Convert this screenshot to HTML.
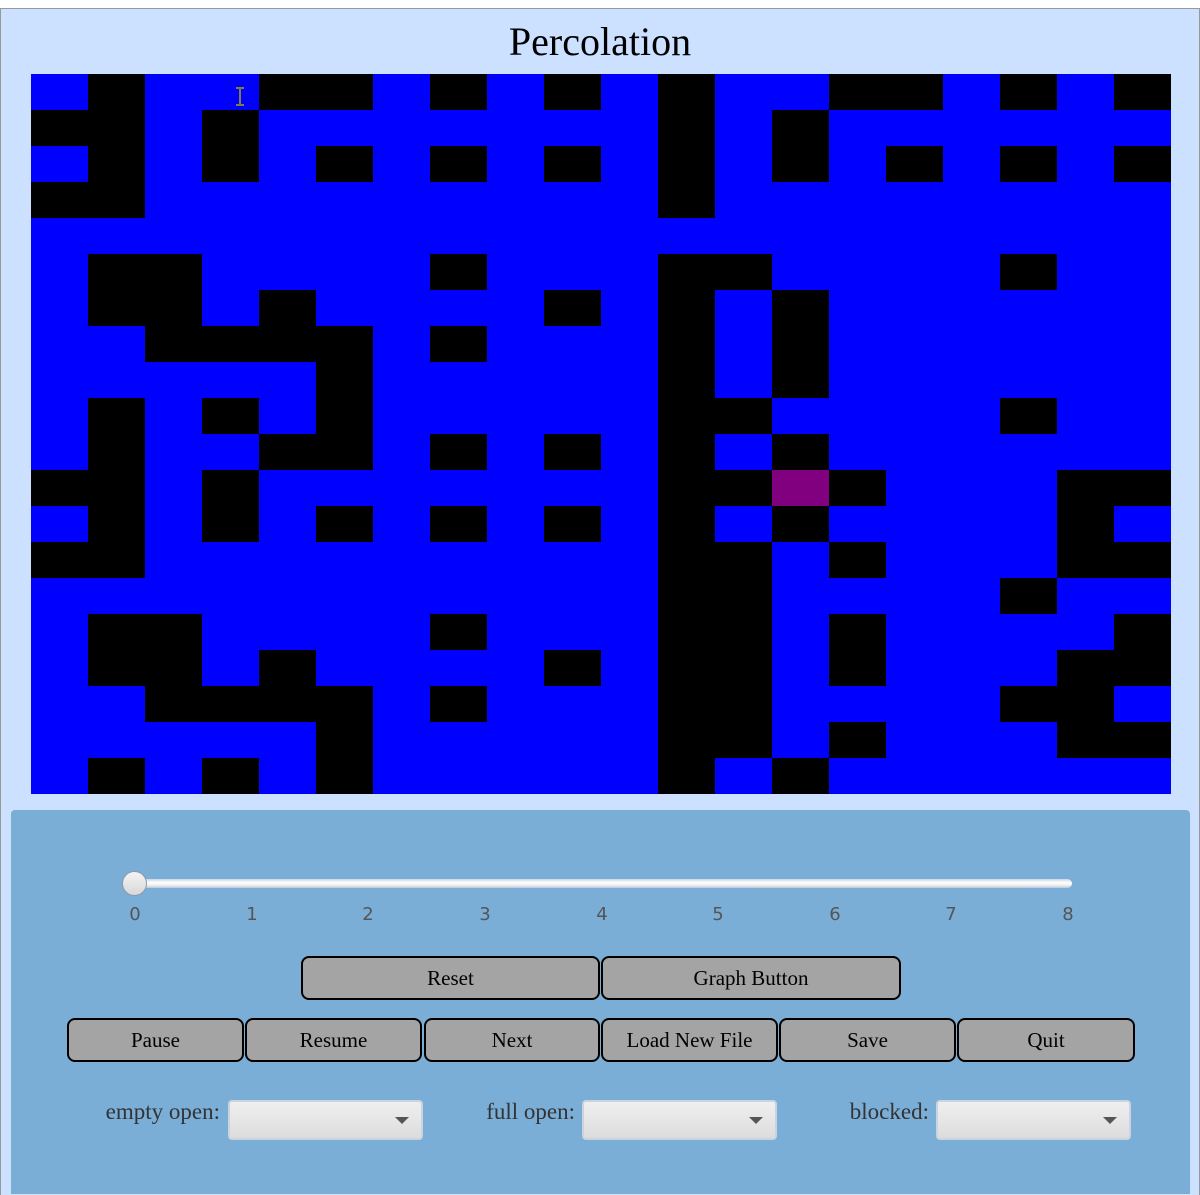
<!DOCTYPE html>
<html><head><style>
body{margin:0;width:1200px;height:1194px;background:#fff;position:relative;overflow:hidden;font-family:"Liberation Serif",serif}
#frame{position:absolute;left:0;top:8px;width:1198px;height:1186px;background:#cce0ff;border:1px solid #999;border-bottom:none}
h1{position:absolute;left:0;width:1200px;top:20px;margin:0;text-align:center;font-weight:normal;font-size:40px;line-height:44px}
#grid{position:absolute;left:31px;top:74px;width:1140px;height:720px;background:#0000ff}
#grid div{position:absolute;width:57px;height:36px;background:#000}
#panel{position:absolute;left:11px;top:810px;width:1179px;height:384px;background:#7aaed6;border-radius:4px 4px 0 0}
.track{position:absolute;left:130px;top:879px;width:942px;height:9px;border-radius:5px;background:linear-gradient(#c9d6e6,#fff 40%,#eee 70%,#b8c8dc)}
.thumb{position:absolute;left:122px;top:871px;width:25px;height:25px;border-radius:50%;background:linear-gradient(#f4f4f4,#d8d8d8);border:1px solid #8a9aaa;box-sizing:border-box}
.tick{position:absolute;top:904px;font-family:"DejaVu Sans",sans-serif;font-size:18px;color:#555;width:30px;margin-left:-15px;text-align:center}
.btn{position:absolute;height:44px;box-sizing:border-box;border:2px solid #000;border-radius:8px;background:#a4a4a4;font-size:21px;text-align:center;line-height:40px;color:#000}
.lbl{position:absolute;top:1099px;font-size:23px;color:#333;text-align:right}
.dd{position:absolute;top:1100px;width:195px;height:40px;box-sizing:border-box;border:2px solid #c8d4e0;border-radius:4px;background:linear-gradient(#efefef,#e6e6e6 50%,#dcdcdc)}
.dd:after{content:"";position:absolute;right:12px;top:15px;border-left:7px solid transparent;border-right:7px solid transparent;border-top:7px solid #555}
</style></head><body>
<div id="frame"></div>
<h1>Percolation</h1>
<div id="grid"></div>
<svg style="position:absolute;left:234px;top:87px" width="12" height="19"><path d="M2 1h8M6 1v17M2 18h8" stroke="#ff0" stroke-width="1.5" fill="none"/><path d="M2 1h8M6 1v17M2 18h8" stroke="#000" stroke-width="0.5" fill="none"/></svg>
<div id="panel"></div>
<div class="track"></div><div class="thumb"></div>
<div class="tick" style="left:135px">0</div><div class="tick" style="left:252px">1</div><div class="tick" style="left:368px">2</div><div class="tick" style="left:485px">3</div><div class="tick" style="left:602px">4</div><div class="tick" style="left:718px">5</div><div class="tick" style="left:835px">6</div><div class="tick" style="left:951px">7</div><div class="tick" style="left:1068px">8</div>
<div class="btn" style="left:301px;top:956px;width:299px">Reset</div>
<div class="btn" style="left:601px;top:956px;width:300px">Graph Button</div>
<div class="btn" style="left:67px;top:1018px;width:177px">Pause</div>
<div class="btn" style="left:245px;top:1018px;width:177px">Resume</div>
<div class="btn" style="left:424px;top:1018px;width:176px">Next</div>
<div class="btn" style="left:601px;top:1018px;width:177px">Load New File</div>
<div class="btn" style="left:779px;top:1018px;width:177px">Save</div>
<div class="btn" style="left:957px;top:1018px;width:178px">Quit</div>
<div class="lbl" style="left:40px;width:180px">empty open:</div><div class="dd" style="left:228px"></div>
<div class="lbl" style="left:400px;width:175px">full open:</div><div class="dd" style="left:582px"></div>
<div class="lbl" style="left:760px;width:169px">blocked:</div><div class="dd" style="left:936px"></div>
<script>
var rows=[[1,4,5,7,9,11,14,15,17,19],[0,1,3,11,13],[1,3,5,7,9,11,13,15,17,19],[0,1,11],[],[1,2,7,11,12,17],[1,2,4,9,11,13],[2,3,4,5,7,11,13],[5,11,13],[1,3,5,11,12,17],[1,4,5,7,9,11,13],[0,1,3,11,12,-13,14,18,19],[1,3,5,7,9,11,13,18],[0,1,11,12,14,18,19],[11,12,17],[1,2,7,11,12,14,19],[1,2,4,9,11,12,14,18,19],[2,3,4,5,7,11,12,17,18],[5,11,12,14,18,19],[1,3,5,11,13]];
var g=document.getElementById('grid'),h='';
rows.forEach(function(r,y){r.forEach(function(c){var p=c<0;c=Math.abs(c);h+='<div style="left:'+c*57+'px;top:'+y*36+'px'+(p?';background:#800080':'')+'"></div>';});});
g.innerHTML=h;
</script>
</body></html>
